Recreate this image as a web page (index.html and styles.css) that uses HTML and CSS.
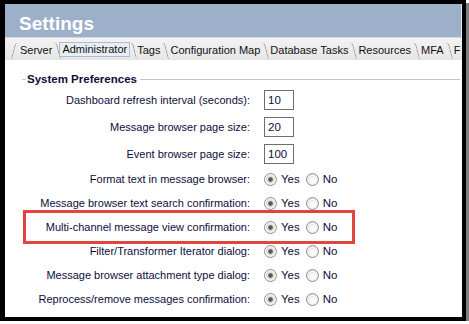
FILE: index.html
```html
<!DOCTYPE html>
<html lang="en">
  <head>
    <meta charset="UTF-8" />
    <title>Settings</title>
    <link rel="stylesheet" href="styles.css">
  </head>
  <body>
    <div class="frame">
      <div class="header">Settings</div>

      <div class="tabs">
        <span class="tab first">Server</span>
        <span class="tab active">Administrator</span>
        <span class="tab">Tags</span>
        <span class="tab">Configuration Map</span>
        <span class="tab">Database Tasks</span>
        <span class="tab">Resources</span>
        <span class="tab">MFA</span>
        <span class="tab last">F</span>
      </div>

      <div class="panel">
        <div class="legend">
          <span class="stub"></span>
          <span class="legend-title">System Preferences</span>
          <span class="rule"></span>
        </div>

        <div class="row tall">
          <label>Dashboard refresh interval (seconds):</label>
          <input type="text" value="10" />
        </div>
        <div class="row tall">
          <label>Message browser page size:</label>
          <input type="text" value="20" />
        </div>
        <div class="row tall">
          <label>Event browser page size:</label>
          <input type="text" value="100" />
        </div>

        <div class="row">
          <label>Format text in message browser:</label>
          <div class="choice">
            <input type="radio" name="r1" checked /><span>Yes</span>
            <input type="radio" name="r1" /><span>No</span>
          </div>
        </div>
        <div class="row">
          <label>Message browser text search confirmation:</label>
          <div class="choice">
            <input type="radio" name="r2" checked /><span>Yes</span>
            <input type="radio" name="r2" /><span>No</span>
          </div>
        </div>
        <div class="row highlight">
          <label>Multi-channel message view confirmation:</label>
          <div class="choice">
            <input type="radio" name="r3" checked /><span>Yes</span>
            <input type="radio" name="r3" /><span>No</span>
          </div>
        </div>
        <div class="row">
          <label>Filter/Transformer Iterator dialog:</label>
          <div class="choice">
            <input type="radio" name="r4" checked /><span>Yes</span>
            <input type="radio" name="r4" /><span>No</span>
          </div>
        </div>
        <div class="row">
          <label>Message browser attachment type dialog:</label>
          <div class="choice">
            <input type="radio" name="r5" checked /><span>Yes</span>
            <input type="radio" name="r5" /><span>No</span>
          </div>
        </div>
        <div class="row">
          <label>Reprocess/remove messages confirmation:</label>
          <div class="choice">
            <input type="radio" name="r6" checked /><span>Yes</span>
            <input type="radio" name="r6" /><span>No</span>
          </div>
        </div>
      </div>
    </div>
  </body>
</html>
```

FILE: styles.css
```css
body {
  margin: 0;
  font-family: "Liberation Sans", Arial, sans-serif;
  font-size: 11px;
  color: #0d0d3d;
  background: #ffffff;
}
.frame {
  width: 466px;
  height: 321px;
  box-sizing: border-box;
  border-style: solid;
  border-color: #000;
  border-width: 4px 4px 4px 5px;
  box-shadow: 3px 3px 0 #808080;
  background: #fff;
  overflow: hidden;
}
.header {
  height: 33px;
  box-sizing: border-box;
  padding: 9px 0 0 14px;
  background: #9cb0ca;
  border-right: 1px solid #e8edf3;
  color: #fff;
  font-size: 19px;
  font-weight: bold;
  line-height: 22px;
}

/* tab strip */
.tabs {
  display: flex;
  align-items: flex-end;
  height: 23px;
  box-sizing: border-box;
  padding: 0 0 1px 10px;
  background: linear-gradient(#f3f3f3, #e6e6e6);
  border-top: 1px solid #d6d6d6;
  white-space: nowrap;
  overflow: hidden;
}
.tab {
  position: relative;
  height: 18px;
  line-height: 18px;
  padding: 0 5px;
  color: #111;
  font-size: 11px;
}
.tab::after {
  content: "";
  position: absolute;
  right: -2px;
  top: 2px;
  bottom: 0;
  width: 3px;
  border-right: 1px solid #9a9a9a;
  border-top-right-radius: 3px;
  transform: skewX(14deg);
}
.tab.first::before {
  content: "";
  position: absolute;
  left: -2px;
  top: 2px;
  bottom: 0;
  width: 3px;
  border-left: 1px solid #9a9a9a;
  border-top-left-radius: 3px;
  transform: skewX(-14deg);
}
.tab.last::after {
  display: none;
}
.tab.active {
  margin: 0 2px 2px;
  padding: 0 2px;
  height: 13px;
  line-height: 13px;
  background: #e9eef5;
  border: 1px solid #a9bdd4;
}
.tab.active::after {
  right: -6px;
  top: 0;
  bottom: -2px;
}

/* preferences panel */
.panel {
  padding-top: 12px;
}
.legend {
  display: flex;
  align-items: center;
  height: 14px;
  margin: 0 2px 0 17px;
}
.stub {
  width: 4px;
  border-top: 1px solid #c4c4c4;
}
.legend-title {
  padding: 0 3px 0 1px;
  font-weight: bold;
  font-size: 11.5px;
  color: #0d0d3d;
}
.rule {
  flex: 1;
  border-top: 1px solid #c4c4c4;
}
.row {
  display: flex;
  align-items: center;
  height: 24px;
}
.row.tall {
  height: 27px;
}
.row label {
  width: 245px;
  margin-right: 14px;
  text-align: right;
  white-space: nowrap;
}
.row input[type="text"] {
  width: 30px;
  height: 20px;
  box-sizing: border-box;
  margin: 0;
  padding: 0 3px;
  border: 1px solid #6e6e6e;
  font-family: inherit;
  font-size: 11.5px;
  color: #0d0d3d;
  outline: none;
}
.choice {
  display: flex;
  align-items: center;
}
.choice span {
  margin: 0 6px 0 4px;
  font-size: 11.5px;
}
.choice input[type="radio"] {
  appearance: none;
  -webkit-appearance: none;
  width: 13px;
  height: 13px;
  margin: 0;
  box-sizing: border-box;
  border: 1px solid #8e8e8e;
  border-radius: 50%;
  background: radial-gradient(circle at 60% 65%, #ffffff, #e2e2e2);
}
.choice input[type="radio"]:checked {
  background: radial-gradient(circle, #4d4d4d 0, #6a6a6a 2px, #d8d8d8 2.6px, #ffffff 6px);
}

/* annotation box */
.highlight {
  position: relative;
}
.highlight::after {
  content: "";
  position: absolute;
  left: 18px;
  top: -5px;
  width: 332px;
  height: 34px;
  box-sizing: border-box;
  border: 3px solid #e2453d;
}
```
